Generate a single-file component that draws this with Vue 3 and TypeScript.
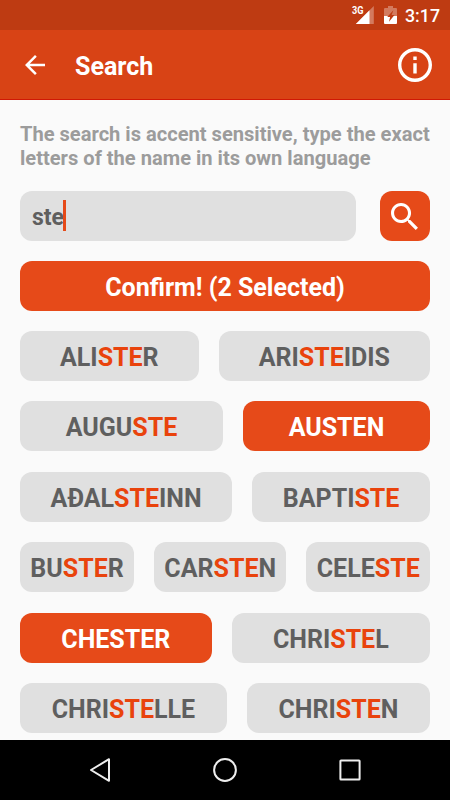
<script setup lang="ts">
interface Chip {
  before: string
  match: string
  after: string
  selected?: boolean
}

const query = 'ste'

function chip(name: string, selected = false): Chip {
  const at = name.indexOf(query.toUpperCase())
  const end = at + query.length
  return { before: name.slice(0, at), match: name.slice(at, end), after: name.slice(end), selected }
}

const rows: Chip[][] = [
  [chip('ALISTER'), chip('ARISTEIDIS')],
  [chip('AUGUSTE'), chip('AUSTEN', true)],
  [chip('AÐALSTEINN'), chip('BAPTISTE')],
  [chip('BUSTER'), chip('CARSTEN'), chip('CELESTE')],
  [chip('CHESTER', true), chip('CHRISTEL')],
  [chip('CHRISTELLE'), chip('CHRISTEN')],
]

const selectedCount = rows.flat().filter((c) => c.selected).length
</script>

<template>
  <div class="screen">
    <div class="status">
      <svg class="signal" width="24" height="20" viewBox="0 0 24 20">
        <path d="M23.8 1V19H5.8Z" fill="#fff" fill-opacity=".32" />
        <path d="M19.5 5.3V19H5.8Z" fill="#fff" />
        <text x="2" y="9" textLength="11.5" lengthAdjust="spacingAndGlyphs">3G</text>
      </svg>
      <svg class="battery" width="13" height="18" viewBox="0 0 13 18">
        <path d="M1 2H4V0H9V2H12Q13 2 13 3V10H0V3Q0 2 1 2Z" fill="#fff" fill-opacity=".32" />
        <path d="M0 10H13V17Q13 18 12 18H1Q0 18 0 17Z" fill="#fff" />
        <path d="M9.4 4.3L3.2 11H6.1L5 15.8L10.5 9H7.6Z" fill="#be3b12" />
      </svg>
      <span class="clock">3:17</span>
    </div>

    <header class="bar">
      <svg class="back" width="20" height="20" viewBox="4 4 16 16">
        <path d="M20 11H7.83l5.59-5.59L12 4l-8 8 8 8 1.41-1.41L7.83 13H20v-2z" fill="#fff" />
      </svg>
      <h1 class="title">Search</h1>
      <svg class="info" width="34" height="34" viewBox="2 2 20 20">
        <path d="M11 17h2v-6h-2v6zm1-15C6.48 2 2 6.48 2 12s4.48 10 10 10 10-4.48 10-10S17.52 2 12 2zm0 18c-4.41 0-8-3.59-8-8s3.59-8 8-8 8 3.59 8 8-3.59 8-8 8zM11 9h2V7h-2v2z" fill="#fff" />
      </svg>
    </header>

    <main class="content">
      <p class="hint">The search is accent sensitive, type the exact<br />letters of the name in its own language</p>
      <div class="search-row">
        <div class="field"><span>{{ query }}</span><i class="caret"></i></div>
        <button class="search-btn" aria-label="Search">
          <svg width="27" height="27" viewBox="3 3 17.49 17.49">
            <path d="M15.5 14h-.79l-.28-.27C15.41 12.59 16 11.11 16 9.5 16 5.91 13.09 3 9.5 3S3 5.91 3 9.5 5.91 16 9.5 16c1.61 0 3.09-.59 4.23-1.57l.27.28v.79l5 4.99L20.49 19l-4.99-5zm-6 0C7.01 14 5 11.99 5 9.5S7.01 5 9.5 5 14 7.01 14 9.5 11.99 14 9.5 14z" fill="#fff" />
          </svg>
        </button>
      </div>
      <button class="confirm">Confirm! ({{ selectedCount }} Selected)</button>
      <div class="names">
        <div v-for="(row, r) in rows" :key="r" class="row">
          <button v-for="(c, i) in row" :key="i" class="chip" :class="{ selected: c.selected }">{{ c.before }}<em>{{ c.match }}</em>{{ c.after }}</button>
        </div>
      </div>
    </main>

    <nav class="nav">
      <svg width="28" height="28" viewBox="0 0 28 28"><path d="M23 3.2V24.8L5 14Z" /></svg>
      <svg width="28" height="28" viewBox="0 0 28 28"><circle cx="14" cy="14" r="10.9" /></svg>
      <svg width="28" height="28" viewBox="0 0 28 28"><rect x="4.4" y="4.4" width="19.2" height="19.2" rx=".6" /></svg>
    </nav>
  </div>
</template>

<style>
body {
  margin: 0;
}
</style>

<style scoped>
.screen {
  width: 450px;
  height: 800px;
  display: flex;
  flex-direction: column;
  overflow: hidden;
  background: #fafafa;
  font-family: Roboto, sans-serif;
  font-weight: 700;
}
.status {
  flex: none;
  height: 30px;
  box-sizing: border-box;
  display: flex;
  align-items: flex-start;
  justify-content: flex-end;
  padding: 5px 10px 0 0;
  background: #be3b12;
  color: #fff;
}
.signal text {
  font: 700 10.5px Roboto, sans-serif;
  fill: #fff;
}
.battery {
  margin: 1px 8px 0 10px;
}
.clock {
  font-size: 17.8px;
  font-weight: 500;
  line-height: 22px;
}
.bar {
  flex: none;
  height: 70px;
  box-sizing: border-box;
  display: flex;
  align-items: center;
  padding: 0 18px 0 25px;
  background: #d84315;
  border-bottom: 1px solid #d01805;
}
.title {
  flex: 1;
  margin: 4px 0 0 30px;
  font-size: 25px;
  line-height: 30px;
  color: #fff;
}
.content {
  flex: 1;
  min-height: 0;
  overflow: hidden;
  padding: 22px 20px 0;
}
.hint {
  margin: 0 0 21px;
  font-size: 20.1px;
  line-height: 24px;
  white-space: nowrap;
  color: #9c9c9c;
}
.search-row {
  display: flex;
  gap: 24px;
}
.field {
  flex: 1;
  height: 50px;
  box-sizing: border-box;
  display: flex;
  align-items: center;
  padding: 2px 12px 0;
  border-radius: 12px;
  background: #e0e0e0;
  color: #5f5f5f;
  font-size: 23px;
}
.caret {
  width: 3px;
  height: 31px;
  margin: 0 0 3px -1px;
  background: #e64a19;
}
button {
  border: 0;
  margin: 0;
  font: inherit;
  border-radius: 12px;
}
.search-btn {
  width: 50px;
  height: 50px;
  padding: 0 1px 0 0;
  display: flex;
  align-items: center;
  justify-content: center;
  background: #e64a19;
}
.confirm {
  display: block;
  width: 100%;
  height: 50px;
  margin: 20px 0;
  padding: 2px 0 0;
  background: #e64a19;
  color: #fff;
  font-size: 25px;
}
.names {
  display: flex;
  flex-direction: column;
  gap: 20.4px;
}
.row {
  display: flex;
  gap: 20px;
}
.chip {
  flex: 1 1 auto;
  height: 50px;
  padding: 3.2px 0 0;
  background: #e0e0e0;
  color: #5f5f5f;
  font-size: 25px;
  white-space: nowrap;
}
.chip em {
  font-style: normal;
  color: #e9430c;
}
.chip.selected {
  background: #e64a19;
  color: #fff;
}
.chip.selected em {
  color: #fff;
}
.nav {
  flex: none;
  height: 60px;
  display: flex;
  align-items: center;
  justify-content: center;
  gap: 97px;
  background: #000;
}
.nav svg {
  fill: none;
  stroke: #eee;
  stroke-width: 2;
  stroke-linejoin: round;
}
</style>
